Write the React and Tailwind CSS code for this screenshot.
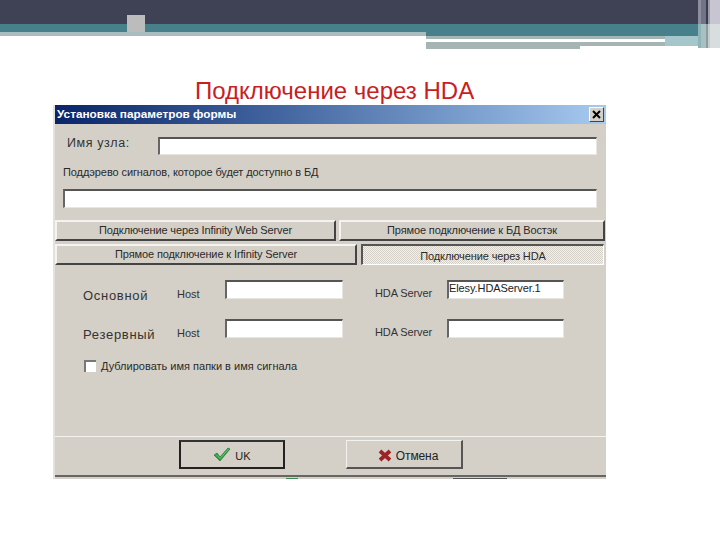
function Inset({ className = "", children }) {
  return (
    <div className={"h-full bg-white border-t-2 border-l-2 border-t-[#555] border-l-[#666] border-r border-b border-r-[#e8e6e0] border-b-[#e8e6e0] text-[11px] leading-[13px] tracking-[-0.1px] text-[#222] " + className}>
      {children}
    </div>
  )
}

function TabButton({ children, className = "" }) {
  return (
    <div className={"flex items-center justify-center bg-[#d4d0c8] border-t-2 border-l-2 border-t-[#f4f3ef] border-l-[#f4f3ef] border-r-2 border-b-2 border-r-[#444] border-b-[#444] text-[11px] tracking-[-0.12px] text-[#2a2a2a] " + className}>
      {children}
    </div>
  )
}

function ServerRow({ name, value, className = "" }) {
  return (
    <div className={"flex h-[19px] " + className}>
      <span className="w-[94px] ml-[28px] text-[13px] tracking-[0.7px] leading-[31px] text-[#333]">{name}</span>
      <span className="w-[48px] text-[11px] leading-[28px] text-[#333]">Host</span>
      <div className="w-[118px]"><Inset /></div>
      <span className="w-[32px]" />
      <span className="w-[72px] text-[11px] tracking-[-0.1px] leading-[27px] text-[#333]">HDA Server</span>
      <div className="w-[117px]"><Inset>{value}</Inset></div>
    </div>
  )
}

export default function App() {
  return (
    <div className="relative w-[720px] h-[540px] bg-white overflow-hidden font-['Liberation_Sans',Arial,sans-serif]">
      {/* slide header */}
      <div className="relative h-[49px]">
        <div className="h-[24px] bg-[#3f4254]" />
        <div className="h-[8px] bg-[#47808a]" />
        <div className="flex">
          <div className="w-[426px] h-[4px] bg-[#a9bcbf]" />
          <div className="flex-1">
            <div className="h-[4px] bg-[#47808a]" />
            <div className="h-[3px] bg-[#a3b5b5]" />
            <div className="h-[3px] w-[241px] bg-white" />
            <div className="h-[4px] w-[241px] bg-[#a6b5b3]" />
            <div className="h-[3px] w-[154px] bg-[#a6b5b3]" />
          </div>
        </div>
        <div className="absolute left-[127px] top-[15px] w-[18px] h-[17px] bg-[#bcbcbc]" />
        <div className="absolute left-[665px] top-[36px] w-[33px] h-[10px] bg-[#a5c6cb]" />
        <div className="absolute right-0 top-0 w-[22px] h-[24px] flex">
          <div className="w-[3px] bg-[#8d8f9f]" />
          <div className="w-[5px] bg-[#6f7486]" />
          <div className="w-[2px] bg-[#3a3b4c]" />
          <div className="w-[2px] bg-[#9a9aa8]" />
          <div className="flex-1 bg-[#c6c5d1]" />
        </div>
        <div className="absolute right-0 top-[24px] w-[22px] h-[24px] flex">
          <div className="w-[3px] bg-[#8fb4b8]" />
          <div className="w-[5px] bg-[#a9c0c3]" />
          <div className="w-[2px] bg-[#8b9ea3]" />
          <div className="w-[2px] bg-[#c4cccc]" />
          <div className="flex-1 bg-[#d8dede]" />
        </div>
      </div>

      <h1 className="ml-[195px] mt-[30px] text-[24px] leading-[24px] font-normal text-[#c8201f] whitespace-nowrap">
        Подключение через HDA
      </h1>

      {/* dialog */}
      <div className="ml-[53px] mt-[2px] w-[553px] h-[374px] flex flex-col border-l-2 border-l-[#e4e2dc] bg-[#d4d0c8]">
        <div className="h-[19px] shrink-0 flex items-center justify-between pl-[2px] pr-[2px] bg-gradient-to-r from-[#0a246a] to-[#a6caf0]">
          <span className="text-[11.8px] font-bold text-white">Установка параметров формы</span>
          <span className="w-[15px] h-[15px] flex items-center justify-center bg-[#d4d0c8] border border-r-[#444] border-b-[#444] border-t-white border-l-white">
            <svg width="9" height="9" viewBox="0 0 9 9"><path d="M1 1L8 8M8 1L1 8" stroke="#000" strokeWidth="2" /></svg>
          </span>
        </div>

        <div className="flex h-[18px] mt-[13px] pr-[9px]">
          <span className="ml-[12px] w-[91px] text-[12.5px] tracking-[0.6px] leading-[13px] text-[#333]">Имя узла:</span>
          <div className="flex-1"><Inset /></div>
        </div>

        <div className="ml-[8px] mt-[9px] h-[16px] text-[11px] tracking-[-0.1px] leading-[16px] text-[#2a2a2a]">
          Поддэрево сигналов, которое будет доступно в БД
        </div>

        <div className="h-[19px] mt-[9px] ml-[8px] mr-[9px]"><Inset /></div>

        <div className="flex mt-[12px] h-[21px] gap-[3px] pr-[1px]">
          <TabButton className="w-[281px]">Подключение через Infinity Web Server</TabButton>
          <TabButton className="flex-1">Прямое подключение к БД Востэк</TabButton>
        </div>
        <div className="flex mt-[3px] h-[21px] gap-[4px] pr-[2px]">
          <TabButton className="w-[302px]">Прямое подключение к Irfinity Server</TabButton>
          <div className="flex-1 flex items-center justify-center border-t-2 border-l-2 border-t-[#555] border-l-[#555] border-r border-b border-r-white border-b-white bg-[repeating-conic-gradient(#d4d0c8_0_25%,#f2f1ee_0_50%)] bg-[length:2px_2px] text-[11px] tracking-[-0.12px] text-[#2a2a2a] pt-[2px]">
            Подключение через HDA
          </div>
        </div>

        <ServerRow name="Основной" className="mt-[15px]" value="Elesy.HDAServer.1" />
        <ServerRow name="Резервный" className="mt-[20px]" />

        <div className="flex items-center ml-[29px] mt-[21px] h-[14px]">
          <span className="w-[12px] h-[12px] bg-white border-t-2 border-l-2 border-t-[#777] border-l-[#777]" />
          <span className="ml-[5px] text-[11px] text-[#2a2a2a]">Дублировать имя папки в имя сигнала</span>
        </div>

        <div className="mt-[63px] border-t border-t-[#f4f3ef]" />

        <div className="flex mt-[3px] h-[29px]">
          <div className="ml-[124px] w-[106px] flex items-center justify-center border-2 border-[#222] border-t-[#333] text-[11px] text-[#222] gap-[4px] pt-[3px]">
            <svg width="18" height="15" viewBox="0 0 18 15" className="-mt-[3px]">
              <path d="M1 8L4 6L7 10L15 1L17 2L7 14Z" fill="#2e9a3e" stroke="#1c6b2c" strokeWidth="0.6" />
              <path d="M3 7.5L7 11.5L15.5 2" fill="none" stroke="#7fd08a" strokeWidth="0.8" />
            </svg>
            UK
          </div>
          <div className="ml-[61px] w-[117px] flex items-center justify-center border-t border-l border-t-[#f4f3ef] border-l-[#f4f3ef] border-r-2 border-b-2 border-r-[#555] border-b-[#555] text-[12px] tracking-[-0.1px] text-[#222] gap-[4px] pl-[8px] pt-[3px]">
            <svg width="14" height="13" viewBox="0 0 14 13" className="-mt-[1px]"><path d="M2 2L12 11M12 2L2 11" stroke="#9c2326" strokeWidth="3.8" /></svg>
            Отмена
          </div>
        </div>

        {/* clipped remains of the window under the dialog */}
        <div className="mt-auto h-[4px] border-t-2 border-t-[#666] flex">
          <div className="ml-[231px] mt-[1px] w-[12px] h-[1px] bg-[#3c8a4c]" />
          <div className="ml-[155px] mt-[1px] w-[54px] h-[1px] bg-[#555]" />
        </div>
      </div>
    </div>
  )
}
